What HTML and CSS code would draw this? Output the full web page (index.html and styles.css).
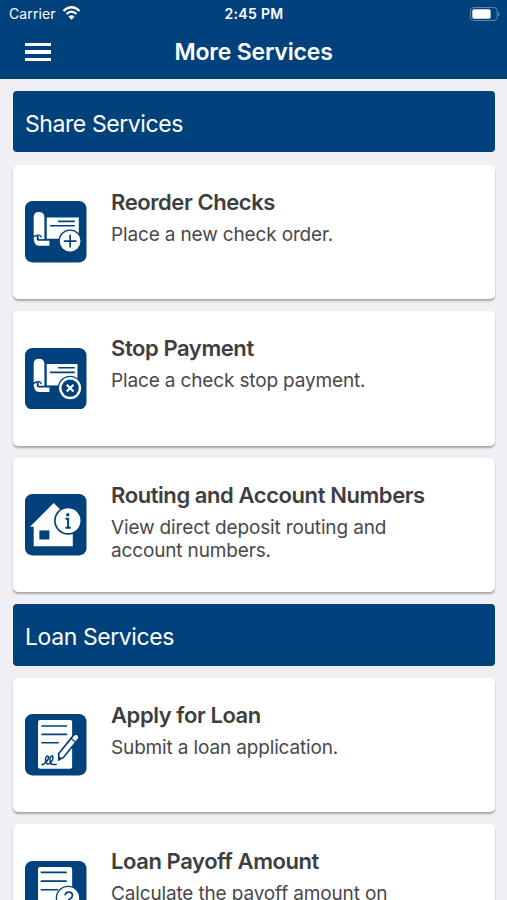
FILE: index.html
```html
<!DOCTYPE html>
<html lang="en">
<head>
    <meta charset="UTF-8">
    <meta name="viewport" content="width=device-width, initial-scale=1.0">
    <title>More Services</title>
    <link rel="stylesheet" href="styles.css">
</head>
<body>

    <header class="header">
        <div class="status-bar">
            <div class="carrier">
                <span>Carrier</span>
                <svg class="wifi" viewBox="0 0 54 42">
                    <path d="M3 15 Q27 -7 51 15" fill="none" stroke="#fff" stroke-width="7"/>
                    <path d="M12 24 Q27 10 42 24" fill="none" stroke="#fff" stroke-width="6.5"/>
                    <path d="M18 32 Q27 24 36 32 L27 41 Z" fill="#fff"/>
                </svg>
            </div>
            <div class="time">2:45 PM</div>
            <svg class="battery" viewBox="0 0 90 42">
                <rect x="1.5" y="1.5" width="80" height="39" rx="10" fill="none" stroke="#5f88ae" stroke-width="3"/>
                <rect x="7" y="7" width="55" height="28" rx="5" fill="#fff"/>
                <path d="M85 14 Q92 21 85 28 Z" fill="#7f9fbd"/>
            </svg>
        </div>
        <div class="nav-bar">
            <button class="menu" aria-label="Menu"><i></i><i></i><i></i></button>
            <h1>More Services</h1>
        </div>
    </header>

    <main class="services">
        <h2 class="section">Share Services</h2>

        <div class="card">
            <svg class="icon" viewBox="0 0 184 184">
                <rect width="184" height="184" rx="22" fill="#02427c"/>
                <path d="M65 49 H161 V113 H65 Z" fill="#fff"/>
                <path d="M26 49 Q26 33 41 33 Q58 33 58 49 V104 H26 Z" fill="#fff"/>
                <path d="M26 109 Q27 104 35 104 V115 Q36 119 42 119 H73 V134 H42 Q26 133 26 109 Z" fill="#fff"/>
                <path d="M41 103 H58 V114 H41 Z" fill="#fff"/>
                <path d="M26 107 Q32 101 42 102 Q47 103 49 109" fill="none" stroke="#02427c" stroke-width="4"/>
                <path d="M99 61 H149 M75 74 H149" stroke="#02427c" stroke-width="5"/>
                <circle cx="135" cy="120" r="35" fill="#02427c"/>
                <circle cx="135" cy="120" r="31" fill="#fff"/>
                <path d="M135 101 V139 M116 120 H154" stroke="#02427c" stroke-width="5"/>
            </svg>
            <div class="text">
                <h3>Reorder Checks</h3>
                <p>Place a new check order.</p>
            </div>
        </div>

        <div class="card">
            <svg class="icon" viewBox="0 0 184 184">
                <rect width="184" height="184" rx="22" fill="#02427c"/>
                <path d="M65 48 H157 V112 H65 Z" fill="#fff"/>
                <path d="M26 48 Q26 32 41 32 Q58 32 58 48 V103 H26 Z" fill="#fff"/>
                <path d="M26 108 Q27 103 35 103 V114 Q36 118 42 118 H73 V132 H42 Q26 131 26 108 Z" fill="#fff"/>
                <path d="M41 102 H58 V113 H41 Z" fill="#fff"/>
                <path d="M26 106 Q32 100 42 101 Q47 102 49 108" fill="none" stroke="#02427c" stroke-width="4"/>
                <path d="M99 59 H149 M75 73 H149" stroke="#02427c" stroke-width="5"/>
                <circle cx="135" cy="120" r="37" fill="#02427c"/>
                <circle cx="135" cy="120" r="33" fill="#fff"/>
                <circle cx="135" cy="120" r="26" fill="#02427c"/>
                <path d="M125 110 L145 130 M145 110 L125 130" stroke="#fff" stroke-width="6.5"/>
            </svg>
            <div class="text">
                <h3>Stop Payment</h3>
                <p>Place a check stop payment.</p>
            </div>
        </div>

        <div class="card">
            <svg class="icon" viewBox="0 0 184 184">
                <rect width="184" height="184" rx="22" fill="#02427c"/>
                <path d="M15 98 L86 27 L143 84 V156 H26 V98 Z" fill="#fff"/>
                <rect x="43" y="109" width="30" height="27" fill="#02427c"/>
                <circle cx="129" cy="80" r="42" fill="#02427c"/>
                <circle cx="129" cy="80" r="37" fill="#fff"/>
                <circle cx="128" cy="62" r="5" fill="#02427c"/>
                <path d="M121 74 H129 V101 M121 101 H137" fill="none" stroke="#02427c" stroke-width="6"/>
            </svg>
            <div class="text">
                <h3>Routing and Account Numbers</h3>
                <p>View direct deposit routing and account numbers.</p>
            </div>
        </div>

        <h2 class="section">Loan Services</h2>

        <div class="card">
            <svg class="icon" viewBox="0 0 184 184">
                <rect width="184" height="184" rx="22" fill="#02427c"/>
                <rect x="39" y="18" width="102" height="146" rx="6" fill="#fff"/>
                <path d="M49 36 H126 M49 61 H126 M49 86 H101" stroke="#02427c" stroke-width="5"/>
                <path d="M49 152 C62 151 76 129 68 126 C59 125 59 151 70 150 C80 148 88 127 81 125 C72 125 72 151 84 151 H95" fill="none" stroke="#02427c" stroke-width="4.5"/>
                <path d="M101 118 L145 64 Q152 57 159 63 Q165 69 159 76 L115 130 L101 137 Z" fill="#fff" stroke="#02427c" stroke-width="5"/>
                <path d="M101 125 L109 133 L100 138 Z" fill="#02427c"/>
                <path d="M138 73 L150 83" stroke="#02427c" stroke-width="4"/>
            </svg>
            <div class="text">
                <h3>Apply for Loan</h3>
                <p>Submit a loan application.</p>
            </div>
        </div>

        <div class="card">
            <svg class="icon" viewBox="0 0 184 184">
                <rect width="184" height="184" rx="22" fill="#02427c"/>
                <rect x="39" y="18" width="102" height="146" rx="6" fill="#fff"/>
                <path d="M47 34 H125 M47 60 H125 M47 86 H99" stroke="#02427c" stroke-width="5"/>
                <circle cx="129" cy="111" r="37" fill="#02427c"/>
                <circle cx="129" cy="111" r="33" fill="#fff"/>
                <path d="M120 103 Q121 93 131 93 Q142 93 142 103 Q142 110 131 116 V122" fill="none" stroke="#02427c" stroke-width="5"/>
                <circle cx="131" cy="131" r="3.5" fill="#02427c"/>
            </svg>
            <div class="text">
                <h3>Loan Payoff Amount</h3>
                <p>Calculate the payoff amount on</p>
            </div>
        </div>
    </main>

</body>
</html>
```
FILE: styles.css
```css
* {
    box-sizing: border-box;
}
body {
    margin: 0;
    height: 100vh;
    overflow: hidden;
    font-family: Inter, "Liberation Sans", sans-serif;
    background-color: #efeff4;
    color: #3e3e40;
}
h1, h2, h3, p {
    margin: 0;
}
.header {
    height: 79px;
    background-color: #02427c;
    color: #fff;
}
.status-bar {
    display: grid;
    grid-template-columns: 1fr auto 1fr;
    align-items: center;
    height: 27px;
    padding: 0 6px 0 9px;
    font-size: 14px;
}
.carrier {
    display: flex;
    align-items: center;
    gap: 6px;
    letter-spacing: 0.1px;
}
.wifi {
    width: 19px;
    height: 14px;
    margin-top: -2px;
}
.time {
    padding-right: 2px;
    font-weight: 600;
    letter-spacing: 0.3px;
}
.battery {
    width: 30px;
    height: 14px;
    margin-right: 1px;
    justify-self: end;
}
.nav-bar {
    display: grid;
    grid-template-columns: 1fr auto 1fr;
    align-items: center;
    height: 50px;
    padding: 0 25px;
}
.menu {
    display: flex;
    flex-direction: column;
    gap: 4px;
    width: 26px;
    padding: 0;
    border: 0;
    background: none;
}
.menu i {
    height: 3.3px;
    background-color: #fff;
}
h1 {
    font-size: 23px;
    font-weight: 600;
    letter-spacing: -0.17px;
}
.services {
    display: flex;
    flex-direction: column;
    gap: 12.2px;
    padding: 12.4px 12.5px;
}
.section {
    display: flex;
    align-items: center;
    flex-shrink: 0;
    height: 61.1px;
    padding: 4px 12.5px 0;
    border-radius: 4px;
    background-color: #02427c;
    color: #fff;
    font-size: 23px;
    font-weight: 400;
    letter-spacing: -0.42px;
}
.card {
    display: flex;
    flex-shrink: 0;
    gap: 24.5px;
    height: 134.4px;
    padding: 23px 12.5px;
    border-radius: 5px;
    background-color: #fff;
    box-shadow: 0 2px 2px rgba(0, 0, 0, 0.3);
}
.icon {
    flex-shrink: 0;
    align-self: center;
    width: 61.5px;
    height: 61.5px;
}
.text {
    max-width: 340px;
}
h3 {
    font-size: 22px;
    font-weight: 600;
    line-height: 28px;
    letter-spacing: -0.42px;
}
p {
    max-width: 300px;
    margin-top: 7px;
    color: #48484a;
    font-size: 19px;
    line-height: 23px;
    letter-spacing: -0.15px;
}
```
